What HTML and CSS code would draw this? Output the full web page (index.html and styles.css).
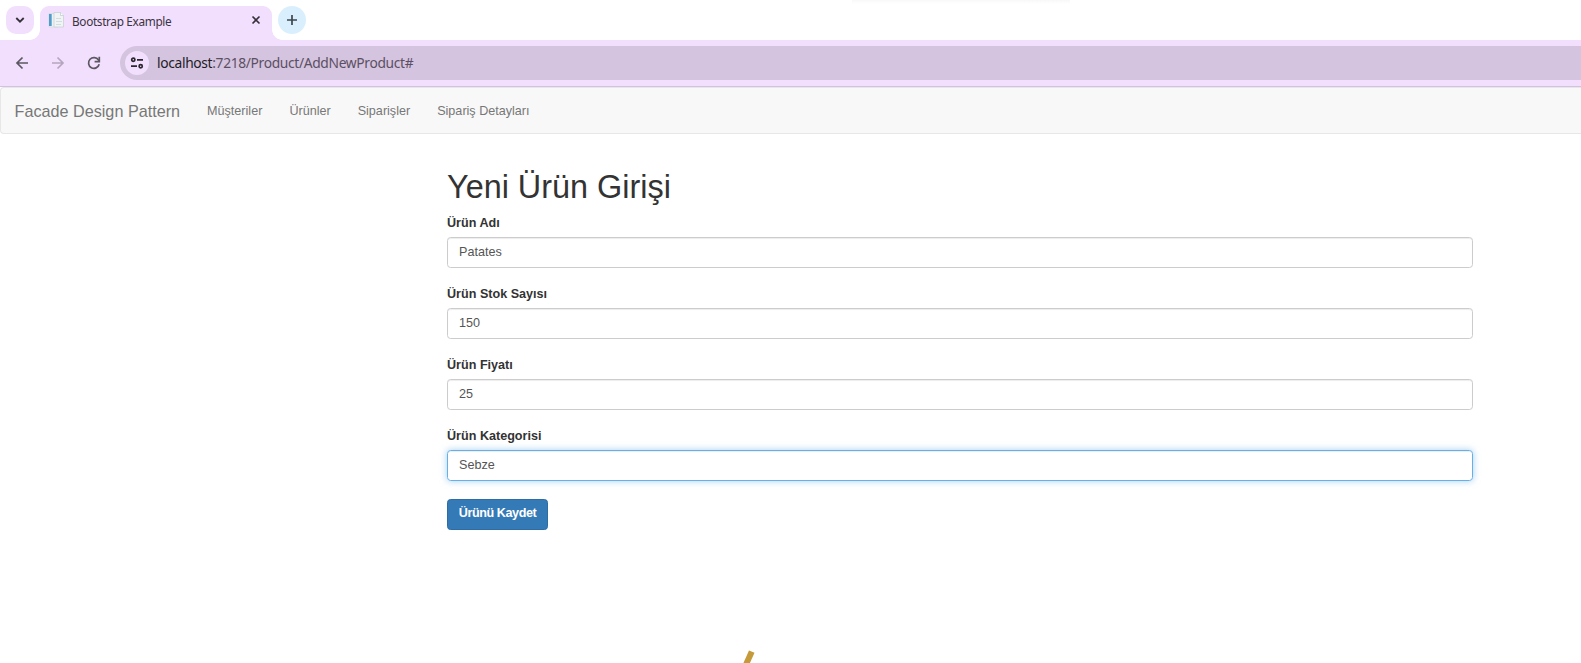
FILE: index.html
```html
<!DOCTYPE html>
<html lang="tr">
<head>
<meta charset="utf-8">
<title>Bootstrap Example</title>
<link rel="stylesheet" href="styles.css">
</head>
<body>
<header class="browser">
  <div class="tabs">
    <div class="tab-search"><svg width="10" height="8" viewBox="0 0 10 8"><path d="M1.300 2 5 5.700 8.700 2" fill="none" stroke="#35303a" stroke-width="1.800"/></svg></div>
    <div class="tab">
      <svg class="favicon" width="17" height="17" viewBox="0 0 17 17"><path d="M1 1.500h9V15H1z" fill="#eef2f2" stroke="#cfd9db" stroke-width=".7"/><path d="M1 2h2.700v12H1z" fill="#4f9dc8"/><path d="M6 .500h6.500l3 3V15H6z" fill="#f0f4f5" stroke="#c3ced1" stroke-width=".7"/><path d="M12.500.500v3h3" fill="#fff" stroke="#b9cacc" stroke-width=".7"/><path d="M8 6.500h5M8 9.500h6M8 12.500h5" stroke="#d3dcde" stroke-width="1"/></svg>
      <span class="tab-title">Bootstrap Example</span>
      <svg class="close" width="10" height="10" viewBox="0 0 10 10"><path d="m1.500 1.500 7 7m0-7-7 7" stroke="#35303a" stroke-width="1.600"/></svg>
    </div>
    <div class="new-tab"><svg width="12" height="12" viewBox="0 0 12 12"><path d="M1 6h10M6 1v10" stroke="#3c474c" stroke-width="1.700"/></svg></div>
    <div class="top-shade"></div>
  </div>
  <div class="toolbar">
    <svg class="nav-icon" width="14" height="14" viewBox="0 0 14 14"><path d="M13 7H2m5.500-5.500L2 7l5.500 5.500" fill="none" stroke="#5b5861" stroke-width="1.700"/></svg>
    <svg class="nav-icon" width="14" height="14" viewBox="0 0 14 14"><path d="M1 7h11M6.500 1.500 12 7l-5.500 5.500" fill="none" stroke="#b5a6bf" stroke-width="1.700"/></svg>
    <svg class="nav-icon" width="14" height="14" viewBox="0 0 14 14"><path d="M12.200 8.300A5.400 5.400 0 1 1 11.500 4L12.500 5.300" fill="none" stroke="#5b5861" stroke-width="1.700"/><path d="M12.300.800v4.900H7.600" fill="none" stroke="#5b5861" stroke-width="1.700"/></svg>
    <div class="address">
      <span class="site-info"><svg width="14" height="12" viewBox="0 0 14 12"><g fill="none" stroke="#2b2730" stroke-width="1.700"><circle cx="3.300" cy="2.800" r="1.600"/><path d="M7 2.800h6M1 9.200h6"/><circle cx="10.700" cy="9.200" r="1.600"/></g></svg></span>
      <span class="url"><span class="host">localhost</span>:7218/Product/AddNewProduct#</span>
    </div>
  </div>
</header>
<nav class="navbar">
  <a class="brand">Facade Design Pattern</a>
  <a class="nav-link">Müşteriler</a>
  <a class="nav-link">Ürünler</a>
  <a class="nav-link">Siparişler</a>
  <a class="nav-link">Sipariş Detayları</a>
</nav>
<main class="content">
  <h1 class="heading">Yeni Ürün Girişi</h1>
  <form class="form">
    <div class="group"><label class="label">Ürün Adı</label><div class="control">Patates</div></div>
    <div class="group"><label class="label">Ürün Stok Sayısı</label><div class="control">150</div></div>
    <div class="group"><label class="label">Ürün Fiyatı</label><div class="control">25</div></div>
    <div class="group"><label class="label">Ürün Kategorisi</label><div class="control focused">Sebze</div></div>
    <button class="save" type="button">Ürünü Kaydet</button>
  </form>
</main>
<svg class="mark" width="16" height="13" viewBox="0 0 16 13"><path d="m6 .500 5.500 2.300L6.500 14H0z" fill="#c49a3a"/></svg>
</body>
</html>
```
FILE: styles.css
```css
* { box-sizing: border-box; }
body {
  margin: 0;
  height: 663px;
  overflow: hidden;
  position: relative;
  background: #fff;
  color: #333;
  font: 12.6px/18px "Liberation Sans", Arial, sans-serif;
}
svg { display: block; flex: none; }
.browser { height: 87px; font-family: "Noto Sans", sans-serif; }
.tabs { display: flex; height: 40px; padding: 6px 0 0 6px; position: relative; }
.tab-search {
  width: 28px; height: 28px; border-radius: 10px; background: #f2dffd;
  display: flex; align-items: center; justify-content: center;
}
.tab {
  position: relative;
  display: flex; align-items: center;
  width: 232px; height: 34px; margin-left: 6px; padding: 0 11px 5px 8px;
  border-radius: 9px 9px 0 0; background: #f2dffd;
}
.tab::before, .tab::after {
  content: ""; position: absolute; bottom: 0; width: 10px; height: 10px;
}
.tab::before { left: -10px; background: radial-gradient(circle at 0 0, transparent 9.5px, #f2dffd 10px); }
.tab::after { right: -10px; background: radial-gradient(circle at 100% 0, transparent 9.5px, #f2dffd 10px); }
.tab-title { margin-left: 7px; flex: 1; font-size: 11.8px; letter-spacing: -.34px; white-space: nowrap; color: #3a3440; }
.close { margin-bottom: 1px; }
.new-tab {
  width: 28px; height: 28px; margin-left: 6px; border-radius: 50%; background: #daeffd;
  display: flex; align-items: center; justify-content: center;
}
.top-shade {
  position: absolute; left: 852px; top: 0; width: 218px; height: 4px;
  background: linear-gradient(#f8f8f8, #fff);
}
.toolbar {
  display: flex; align-items: center; height: 47px; padding: 0 0 1px 15px;
  background: #f2dffd; border-bottom: 1px solid #d3c2de;
}
.nav-icon { margin-right: 22px; }
.address {
  display: flex; align-items: center; flex: 1; height: 34px; margin-left: -3px; padding-left: 5px;
  border-radius: 17px 0 0 17px; background: #d5c4df;
}
.site-info {
  display: flex; align-items: center; justify-content: center;
  width: 24px; height: 24px; border-radius: 50%; background: #f2dffd;
}
.url { margin-left: 8px; font-size: 13.8px; letter-spacing: -.34px; white-space: nowrap; color: #5b5063; }
.host { color: #211c26; }
.navbar {
  display: flex; align-items: center; height: 47px; padding: 1px 0 0 13.5px;
  border: 1px solid #e7e7e7; border-right: 0; border-radius: 4px 0 0 4px;
  background: #f8f8f8; color: #777;
}
.brand { font-size: 16.2px; margin-right: 13.5px; }
.nav-link { padding: 0 13.5px; }
.content { width: 1026px; margin: 35px 0 0 447px; }
.heading { margin: 0 0 8px; font-size: 32.4px; line-height: 36px; font-weight: 500; }
.group { height: 71px; }
.label { display: block; height: 24px; padding-top: 1px; line-height: 18px; font-weight: 700; }
.control {
  height: 31px; padding: 5px 11px; border: 1px solid #ccc; border-radius: 3.6px;
  color: #555; box-shadow: inset 0 1px 1px rgba(0, 0, 0, .075);
}
.focused { border-color: #66afe9; box-shadow: inset 0 1px 1px rgba(0, 0, 0, .075), 0 0 7px rgba(102, 175, 233, .6); }
.save {
  display: block; margin-top: 2px; width: 101px; height: 31px; padding: 0 0 3px;
  border: 1px solid #2e6da4; border-radius: 3.6px; background: #337ab7; color: #fff;
  font: 700 12.6px/18px "Liberation Sans", Arial, sans-serif; letter-spacing: -.42px;
}
.mark { position: absolute; left: 743px; top: 650px; }
```
